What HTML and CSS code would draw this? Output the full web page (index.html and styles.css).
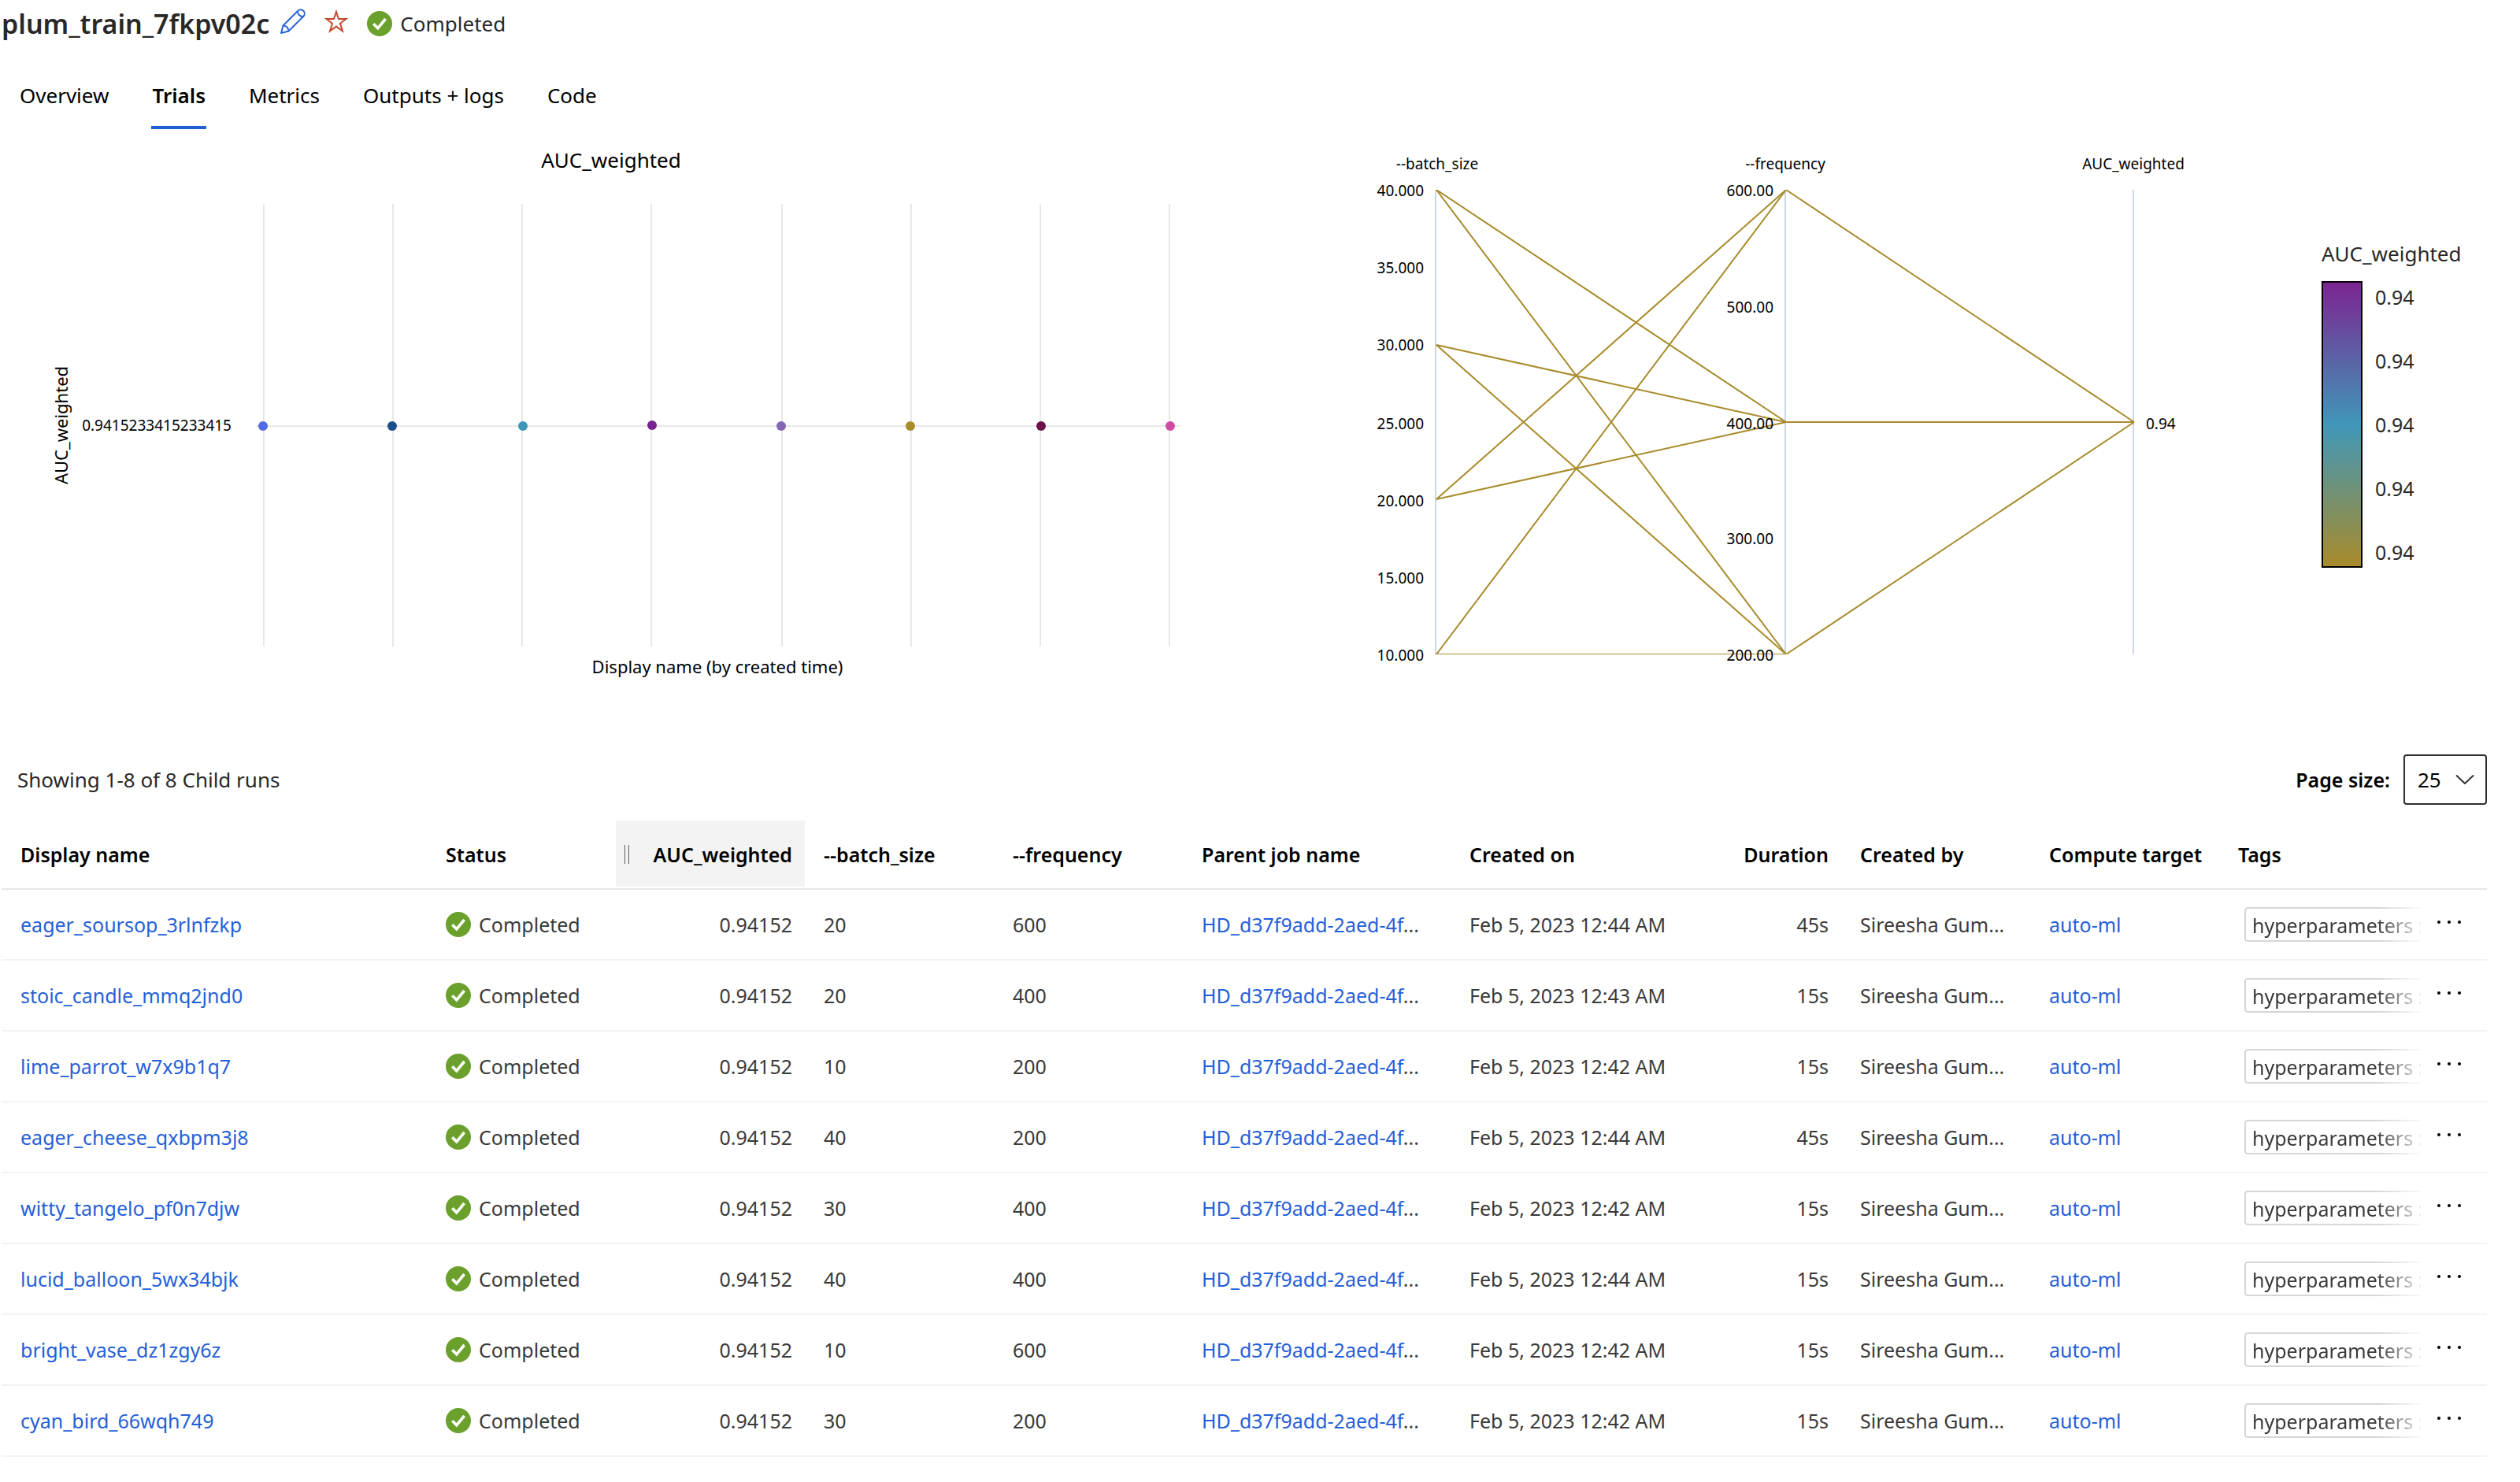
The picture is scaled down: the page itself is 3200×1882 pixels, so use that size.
FILE: index.html
```html
<!DOCTYPE html>
<html lang="en">
<head>
<meta charset="utf-8">
<title>plum_train_7fkpv02c</title>
<link rel="stylesheet" href="styles.css">
</head>
<body>
<svg class="sprite" aria-hidden="true">
  <symbol id="check" viewBox="0 0 32 32">
    <circle cx="16" cy="16" r="16" fill="#6ba02c"/>
    <path d="M8.300 16.300 13.800 21.800 23.600 10" fill="none" stroke="#fff" stroke-width="3.600"/>
  </symbol>
  <symbol id="dots" viewBox="0 0 48 48">
    <circle cx="11" cy="21" r="2"/><circle cx="24" cy="21" r="2"/><circle cx="37" cy="21" r="2"/>
  </symbol>
</svg>

<header class="job-header">
  <h1 class="job-title">plum_train_7fkpv02c</h1>
  <button class="icon-button" type="button" aria-label="Edit name">
    <svg class="icon" viewBox="0 0 32 32" fill="none" stroke="#2b66da" stroke-width="2" stroke-linejoin="round"><path d="M1 31 3.500 21.500 22.300 2.700a4.900 4.900 0 0 1 7 7L10.500 28.500ZM21.800 3.300q.8 6 7 6.900M3.500 21.500q6.500 .5 7 7"/></svg>
  </button>
  <button class="icon-button" type="button" aria-label="Add to favorites">
    <svg class="icon" viewBox="0 0 32 32" fill="none" stroke="#c4472a" stroke-width="2"><path d="M16 4 19 13H28.500L21 18.800 24 28.500 16 22.600 8 28.500 11 18.800 3.500 13H13Z"/></svg>
  </button>
  <span class="status"><svg class="icon" aria-hidden="true"><use href="#check"/></svg>Completed</span>
</header>

<nav class="tabs">
  <a class="tab" href="#overview">Overview</a>
  <a class="tab tab-active" href="#trials" aria-current="page">Trials</a>
  <a class="tab" href="#metrics">Metrics</a>
  <a class="tab" href="#outputs">Outputs + logs</a>
  <a class="tab" href="#code">Code</a>
</nav>

<main>
<section class="charts">
  <svg class="chart" viewBox="0 0 1600 716" role="img" aria-label="AUC_weighted by display name">
    <text class="chart-title" x="776" y="49" text-anchor="middle">AUC_weighted</text>
    <path class="grid-line" d="M335 95V657M499 95V657M663 95V657M827 95V657M993 95V657M1157 95V657M1321 95V657M1485 95V657M325 377H1498"/>
    <circle cx="334" cy="377" r="6" fill="#4f6be8"/>
    <circle cx="498" cy="377" r="6" fill="#1b4d89"/>
    <circle cx="664" cy="377" r="6" fill="#4097b9"/>
    <circle cx="828" cy="376" r="6" fill="#77248f"/>
    <circle cx="992" cy="377" r="6" fill="#8367b6"/>
    <circle cx="1156" cy="377" r="6" fill="#a88b2b"/>
    <circle cx="1322" cy="377" r="6" fill="#6b124a"/>
    <circle cx="1486" cy="377" r="6" fill="#d04ba2"/>
    <text class="axis-title" transform="translate(86 376) rotate(-90)" text-anchor="middle">AUC_weighted</text>
    <text class="tick" x="294" y="383" text-anchor="end">0.9415233415233415</text>
    <text class="axis-title" x="911" y="691" text-anchor="middle">Display name (by created time)</text>
  </svg>

  <svg class="chart" viewBox="0 0 1300 716" role="img" aria-label="Hyperparameters and AUC_weighted">
    <path class="axis-line" d="M223 77V667M667 77V667M1109 77V667"/>
    <svg x="223" y="77" width="890" height="590" viewBox="0 0 890 590">
      <g class="run-line">
        <path d="M1 393 445 0 887 295"/>
        <path d="M1 393 445 295H887"/>
        <path d="M1 590H445L887 295"/>
        <path d="M1 0 445 590"/>
        <path d="M1 197 445 295"/>
        <path d="M1 0 445 295"/>
        <path d="M1 590 445 0"/>
        <path d="M1 197 445 590"/>
      </g>
    </svg>
    <g class="tick" text-anchor="middle">
      <text x="225" y="51">--batch_size</text>
      <text x="667" y="51">--frequency</text>
      <text x="1109" y="51">AUC_weighted</text>
    </g>
    <g class="tick" text-anchor="end">
      <text x="208" y="85">40.000</text>
      <text x="208" y="183">35.000</text>
      <text x="208" y="281">30.000</text>
      <text x="208" y="381">25.000</text>
      <text x="208" y="479">20.000</text>
      <text x="208" y="577">15.000</text>
      <text x="208" y="675">10.000</text>
      <text x="652" y="85">600.00</text>
      <text x="652" y="233">500.00</text>
      <text x="652" y="381">400.00</text>
      <text x="652" y="527">300.00</text>
      <text x="652" y="675">200.00</text>
    </g>
    <text class="tick" x="1125" y="381">0.94</text>
  </svg>

  <div class="legend">
    <div class="legend-title">AUC_weighted</div>
    <div class="legend-scale">
      <div class="legend-bar"></div>
      <div class="legend-labels"><span>0.94</span><span>0.94</span><span>0.94</span><span>0.94</span><span>0.94</span></div>
    </div>
  </div>
</section>

<div class="toolbar">
  <span class="count">Showing 1-8 of 8 Child runs</span>
  <label class="page-label" for="page-size">Page size:</label>
  <span class="select-wrap">
    <select class="page-select" id="page-size"><option>25</option><option>50</option><option>100</option></select>
    <svg class="chevron" viewBox="0 0 24 12" fill="none" stroke="#323130" stroke-width="2" aria-hidden="true"><path d="M1 .500 12 11 23 .500"/></svg>
  </span>
</div>

<table class="runs">
  <colgroup><col class="c-name"><col class="c-mid"><col class="c-mid"><col class="c-mid"><col class="c-mid"><col class="c-parent"><col class="c-date"><col class="c-mid"><col class="c-mid"><col class="c-mid"><col class="c-date"><col></colgroup>
  <thead>
    <tr><th>Display name</th><th>Status</th><th class="num sorted"><span class="sorted-head"><span class="grip"></span>AUC_weighted</span></th><th>--batch_size</th><th>--frequency</th><th>Parent job name</th><th>Created on</th><th class="num">Duration</th><th>Created by</th><th>Compute target</th><th>Tags</th><th></th></tr>
  </thead>
  <tbody>
    <tr><td><a href="#run1">eager_soursop_3rlnfzkp</a></td><td><span class="status"><svg class="icon"><use href="#check"/></svg>Completed</span></td><td class="num">0.94152</td><td>20</td><td>600</td><td><a href="#parent">HD_d37f9add-2aed-4f</a>...</td><td>Feb 5, 2023 12:44 AM</td><td class="num">45s</td><td>Sireesha Gum...</td><td><a href="#compute">auto-ml</a></td><td><span class="tag">hyperparameters :</span></td><td class="actions"><button class="more" type="button" aria-label="More actions"><svg><use href="#dots"/></svg></button></td></tr>
    <tr><td><a href="#run2">stoic_candle_mmq2jnd0</a></td><td><span class="status"><svg class="icon"><use href="#check"/></svg>Completed</span></td><td class="num">0.94152</td><td>20</td><td>400</td><td><a href="#parent">HD_d37f9add-2aed-4f</a>...</td><td>Feb 5, 2023 12:43 AM</td><td class="num">15s</td><td>Sireesha Gum...</td><td><a href="#compute">auto-ml</a></td><td><span class="tag">hyperparameters :</span></td><td class="actions"><button class="more" type="button" aria-label="More actions"><svg><use href="#dots"/></svg></button></td></tr>
    <tr><td><a href="#run3">lime_parrot_w7x9b1q7</a></td><td><span class="status"><svg class="icon"><use href="#check"/></svg>Completed</span></td><td class="num">0.94152</td><td>10</td><td>200</td><td><a href="#parent">HD_d37f9add-2aed-4f</a>...</td><td>Feb 5, 2023 12:42 AM</td><td class="num">15s</td><td>Sireesha Gum...</td><td><a href="#compute">auto-ml</a></td><td><span class="tag">hyperparameters :</span></td><td class="actions"><button class="more" type="button" aria-label="More actions"><svg><use href="#dots"/></svg></button></td></tr>
    <tr><td><a href="#run4">eager_cheese_qxbpm3j8</a></td><td><span class="status"><svg class="icon"><use href="#check"/></svg>Completed</span></td><td class="num">0.94152</td><td>40</td><td>200</td><td><a href="#parent">HD_d37f9add-2aed-4f</a>...</td><td>Feb 5, 2023 12:44 AM</td><td class="num">45s</td><td>Sireesha Gum...</td><td><a href="#compute">auto-ml</a></td><td><span class="tag">hyperparameters :</span></td><td class="actions"><button class="more" type="button" aria-label="More actions"><svg><use href="#dots"/></svg></button></td></tr>
    <tr><td><a href="#run5">witty_tangelo_pf0n7djw</a></td><td><span class="status"><svg class="icon"><use href="#check"/></svg>Completed</span></td><td class="num">0.94152</td><td>30</td><td>400</td><td><a href="#parent">HD_d37f9add-2aed-4f</a>...</td><td>Feb 5, 2023 12:42 AM</td><td class="num">15s</td><td>Sireesha Gum...</td><td><a href="#compute">auto-ml</a></td><td><span class="tag">hyperparameters :</span></td><td class="actions"><button class="more" type="button" aria-label="More actions"><svg><use href="#dots"/></svg></button></td></tr>
    <tr><td><a href="#run6">lucid_balloon_5wx34bjk</a></td><td><span class="status"><svg class="icon"><use href="#check"/></svg>Completed</span></td><td class="num">0.94152</td><td>40</td><td>400</td><td><a href="#parent">HD_d37f9add-2aed-4f</a>...</td><td>Feb 5, 2023 12:44 AM</td><td class="num">15s</td><td>Sireesha Gum...</td><td><a href="#compute">auto-ml</a></td><td><span class="tag">hyperparameters :</span></td><td class="actions"><button class="more" type="button" aria-label="More actions"><svg><use href="#dots"/></svg></button></td></tr>
    <tr><td><a href="#run7">bright_vase_dz1zgy6z</a></td><td><span class="status"><svg class="icon"><use href="#check"/></svg>Completed</span></td><td class="num">0.94152</td><td>10</td><td>600</td><td><a href="#parent">HD_d37f9add-2aed-4f</a>...</td><td>Feb 5, 2023 12:42 AM</td><td class="num">15s</td><td>Sireesha Gum...</td><td><a href="#compute">auto-ml</a></td><td><span class="tag">hyperparameters :</span></td><td class="actions"><button class="more" type="button" aria-label="More actions"><svg><use href="#dots"/></svg></button></td></tr>
    <tr><td><a href="#run8">cyan_bird_66wqh749</a></td><td><span class="status"><svg class="icon"><use href="#check"/></svg>Completed</span></td><td class="num">0.94152</td><td>30</td><td>200</td><td><a href="#parent">HD_d37f9add-2aed-4f</a>...</td><td>Feb 5, 2023 12:42 AM</td><td class="num">15s</td><td>Sireesha Gum...</td><td><a href="#compute">auto-ml</a></td><td><span class="tag">hyperparameters :</span></td><td class="actions"><button class="more" type="button" aria-label="More actions"><svg><use href="#dots"/></svg></button></td></tr>
  </tbody>
</table>
</main>
</body>
</html>
```

FILE: styles.css
```css
* { box-sizing: border-box; }

body {
  margin: 0;
  background: #fff;
  color: #292827;
  font: 26px/36px "Noto Sans", "Open Sans", sans-serif;
}

a { color: #2560d8; text-decoration: none; }
button { padding: 0; border: 0; background: none; font: inherit; cursor: pointer; }
.sprite { position: absolute; width: 0; height: 0; }
.icon { display: block; flex: none; width: 32px; height: 32px; }

.job-header { display: flex; align-items: center; height: 60px; padding-left: 2px; }
.job-title { margin: 0 14px 0 0; font-size: 34px; line-height: 48px; font-weight: 600; }
.icon-button { margin: 0 23px 6px 0; }
.status { display: flex; align-items: center; gap: 10px; }

.tabs { display: flex; gap: 53px; padding: 43px 24px 0; }
.tab { padding: 0 1px 21px; border-bottom: 4px solid transparent; color: #000; }
.tab-active { border-color: #2160d3; font-weight: 600; }

.charts { display: grid; grid-template-columns: 16fr 13fr 3fr; }
.chart { display: block; width: 100%; height: auto; }
.chart text { fill: #000; }
.chart-title { font-size: 26px; }
.axis-title { font-size: 22px; }
.tick { font-size: 19px; }
.grid-line { fill: none; stroke: #e8e8e8; stroke-width: 2; }
.axis-line { fill: none; stroke: #ccd6eb; stroke-width: 2; }
.run-line { fill: none; stroke: #a88b2b; stroke-width: 2; }

.legend { padding: 140px 0 0 48px; }
.legend-title { margin-bottom: 17px; }
.legend-scale { display: flex; gap: 16px; height: 364px; }
.legend-bar { width: 52px; border: 2px solid #000; background: linear-gradient(#7c2591, #4097b9 50%, #a88b2b); }
.legend-labels { display: flex; flex-direction: column; justify-content: space-between; padding: 2px 0; font-size: 25px; }

.toolbar { display: flex; align-items: center; padding: 78px 42px 20px 22px; }
.count { flex: 1; }
.page-label { margin-right: 17px; color: #000; font-size: 25px; font-weight: 600; }
.select-wrap { position: relative; display: block; }
.page-select {
  display: block;
  width: 106px;
  height: 64px;
  padding: 0 16px;
  border: 2px solid #323130;
  border-radius: 4px;
  background: #fff;
  color: #000;
  font: inherit;
  appearance: none;
}
.chevron { position: absolute; top: 26px; right: 16px; width: 24px; height: 12px; pointer-events: none; }

.runs {
  width: calc(100% - 44px);
  margin-left: 2px;
  border-spacing: 0;
  table-layout: fixed;
  color: #3b3a39;
  font-size: 25px;
}
.c-name { width: 540px; }
.c-mid { width: 240px; }
.c-parent { width: 340px; }
.c-date { width: 256px; }
.runs th, .runs td { padding: 0 0 0 24px; text-align: left; white-space: nowrap; }
.runs th { height: 88px; border-bottom: 2px solid #e8e8e8; color: #000; font-weight: 600; }
.runs td { height: 90px; padding-bottom: 1px; border-bottom: 2px solid #f3f3f3; }
.runs .num { padding: 0 16px 0 0; text-align: right; }
.runs td.num { padding-bottom: 1px; }
.runs .sorted { padding-left: 11px; background: linear-gradient(#f3f3f3, #f3f3f3) 0 0 / 100% 84px no-repeat; }
.sorted-head { display: flex; align-items: center; justify-content: space-between; }
.grip { width: 6px; height: 24px; border: solid #605e5c; border-width: 0 1px; }
.tag {
  display: block;
  height: 44px;
  margin-left: 8px;
  padding: 3px 0 0 8px;
  border: 2px solid #d6d6d6;
  border-right: 0;
  border-radius: 4px 0 0 4px;
  -webkit-mask-image: linear-gradient(90deg, #000 168px, transparent 232px);
  mask-image: linear-gradient(90deg, #000 168px, transparent 232px);
}
.runs .actions { padding-left: 12px; }
.more, .more svg { display: block; width: 48px; height: 48px; }
```
